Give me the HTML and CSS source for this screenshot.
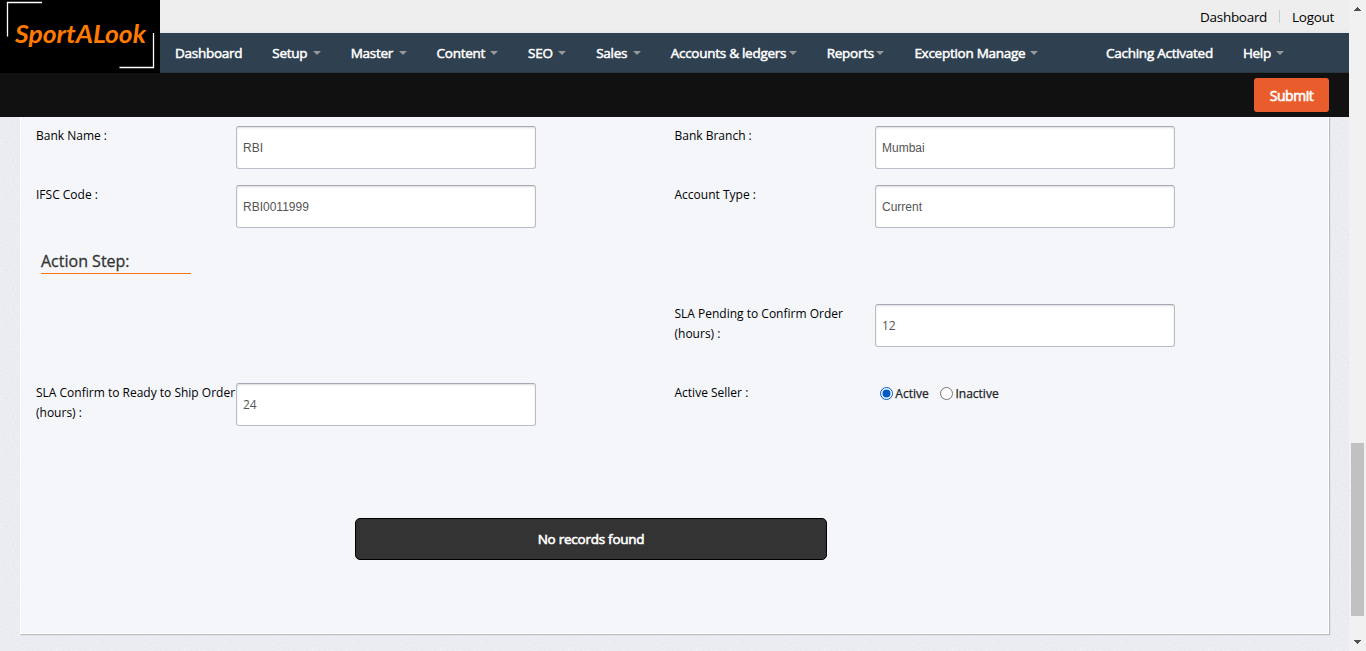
FILE: index.html
```html
<!DOCTYPE html>
<html lang="en">
<head>
<meta charset="utf-8">
<title>SportALook</title>
<link rel="stylesheet" href="styles.css">
</head>
<body>
<div class="page">
  <div class="main">
    <header class="header">
      <a class="logo">
        <svg width="160" height="73" viewBox="0 0 160 73">
          <path d="M7.500 36.500V2.500H42M119.500 67.500H153.500V33" fill="none" stroke="#fff" stroke-width="1.3"/>
          <text x="15" y="43" textLength="131" lengthAdjust="spacingAndGlyphs" class="logo-text">SportALook</text>
        </svg>
      </a>
      <div class="bars">
        <div class="top-links"><a>Dashboard</a><i class="divider"></i><a>Logout</a></div>
        <nav class="nav">
          <a>Dashboard</a>
          <a class="menu">Setup</a>
          <a class="menu">Master</a>
          <a class="menu tight">Content</a>
          <a class="menu">SEO</a>
          <a class="menu">Sales</a>
          <a class="menu snug">Accounts &amp; ledgers</a>
          <a class="menu snug">Reports</a>
          <a class="menu tight">Exception Manage</a>
          <a class="right">Caching Activated</a>
          <a class="menu tight">Help</a>
        </nav>
      </div>
    </header>
    <div class="actions"><button class="submit">Submit</button></div>
    <main class="panel">
      <div class="form">
        <label>Bank Name :</label><input class="field" value="RBI">
        <label>Bank Branch :</label><input class="field" value="Mumbai">
        <label>IFSC Code :</label><input class="field" value="RBI0011999">
        <label>Account Type :</label><input class="field" value="Current">
      </div>
      <h2 class="heading">Action Step:</h2>
      <div class="form steps">
        <span></span><span></span>
        <label>SLA Pending to Confirm Order<br>(hours) :</label><input class="field alt" value="12">
        <label>SLA Confirm to Ready to Ship Order<br>(hours) :</label><input class="field alt" value="24">
        <label>Active Seller :</label>
        <div class="radios">
          <svg width="13" height="13" viewBox="0 0 13 13"><circle cx="6.500" cy="6.500" r="6" fill="#fff" stroke="#005cc8"/><circle cx="6.500" cy="6.500" r="4" fill="#005cc8"/></svg><span class="first">Active</span>
          <svg width="13" height="13" viewBox="0 0 13 13"><circle cx="6.500" cy="6.500" r="6" fill="#fff" stroke="#767676"/></svg><span>Inactive</span>
        </div>
      </div>
      <div class="notice">No records found</div>
    </main>
  </div>
  <div class="scrollbar">
    <svg width="17" height="17"><path d="M8 7h1v1h1v1h1v1h1v1H5v-1h1V9h1V8h1z" fill="#505050"/></svg>
    <div class="thumb"></div>
    <svg width="17" height="17"><path d="M5 6h7v1h-1v1h-1v1H9v1H8V9H7V8H6V7H5z" fill="#505050"/></svg>
  </div>
</div>
</body>
</html>
```
FILE: styles.css
```css
* { box-sizing: border-box; }
body { margin: 0; overflow: hidden; font-family: "Open Sans", sans-serif; color: #000; }
.page { display: flex; width: 1366px; height: 651px; }
.main {
  width: 1349px;
  background: #eeeff4 url("data:image/svg+xml,%3Csvg xmlns='http://www.w3.org/2000/svg' width='128' height='128'%3E%3Cfilter id='n'%3E%3CfeTurbulence type='fractalNoise' baseFrequency='.6' numOctaves='2' stitchTiles='stitch'/%3E%3CfeColorMatrix values='0 0 0 0 .5 0 0 0 0 .5 0 0 0 0 .6 .3 0 0 0 -.09'/%3E%3C/filter%3E%3Crect width='128' height='128' filter='url(%23n)'/%3E%3C/svg%3E");
}
.header { display: flex; height: 73px; }
.logo { width: 160px; background: #000; }
.logo svg { display: block; }
.logo-text { font: italic 700 25px Lato, sans-serif; fill: #ff7a00; }
.bars { flex: 1; }
.top-links {
  display: flex; justify-content: flex-end; align-items: center;
  height: 33px; padding: 1px 15px 1px 0; font-size: 13.500px; letter-spacing: -.3px;
  background: linear-gradient(#eee 29px, #e8e8ea);
}
.divider { width: 1px; height: 13px; margin: 0 12px; background: #ccc; }
.nav { display: flex; height: 40px; background: #2f4050; border-bottom: 1px solid #293743; }
.nav a {
  display: flex; align-items: center; padding: 0 15px; height: 40px;
  font-size: 13.500px; letter-spacing: -.27px; color: #fff; -webkit-text-stroke: .5px #fff; white-space: nowrap;
}
.menu::after {
  content: ""; margin-left: 5.500px; border: 4px solid transparent;
  border-top-color: #999; border-bottom: 0;
}
.tight::after { margin-left: 5px; }
.snug::after { margin-left: 2.500px; }
.nav .right { margin-left: auto; }
.nav a:last-child { margin-right: 50px; }
.actions { display: flex; justify-content: flex-end; height: 44px; padding: 5px 20px 0 0; background: #111; }
.submit {
  width: 75px; height: 34px; padding: 0; border: 0; border-radius: 3px; background: #e95d2d;
  color: #fff; font: 14px "Open Sans", sans-serif; letter-spacing: -.45px; -webkit-text-stroke: .6px #fff;
}
.panel {
  height: 517px; margin: 0 20px; padding: 9px 15px 0; background: #f4f6fa;
  border: 1px solid #fff; border-top: 0; box-shadow: 1px 1px 1px #bbb;
}
.form { display: grid; grid-template-columns: 200px 438.500px 200.500px 300px; row-gap: 16px; }
.form label { font-size: 12px; line-height: 20px; white-space: nowrap; }
.field {
  width: 300px; height: 43px; padding: 0 6px; border: 1px solid #bbbcc8; border-top-color: #a5a8b5;
  border-radius: 3px; background: #fff; box-shadow: inset 0 1px 2px #ddd;
  font: 12px "Liberation Sans", sans-serif; color: #555;
}
.alt { font-family: "Open Sans", sans-serif; }
.heading {
  width: 150px; height: 24px; margin: 22px 0 30px 5px; border-bottom: 1px solid #f97316;
  font-size: 16px; line-height: 22px; font-weight: 400; color: #333; -webkit-text-stroke: .3px #333;
}
.steps { row-gap: 36px; }
.radios { display: flex; height: 21px; align-items: center; padding-left: 5px; font-size: 12px; color: #222; -webkit-text-stroke: .25px #222; }
.radios span { margin-left: 2.300px; }
.radios .first { margin-right: 11.500px; }
.notice {
  display: flex; align-items: center; justify-content: center; width: 472px; height: 42px;
  margin: 92px 0 0 319px; border: 1px solid #000; border-radius: 5px; background: #333;
  color: #fff; font-size: 13.500px; letter-spacing: -.25px; -webkit-text-stroke: .6px #fff;
}
.scrollbar { display: flex; flex-direction: column; width: 17px; background: #f1f1f1; }
.scrollbar svg { display: block; }
.thumb { width: 13px; height: 173px; margin: 426px 0 18px 2px; background: #c1c1c1; }
```
